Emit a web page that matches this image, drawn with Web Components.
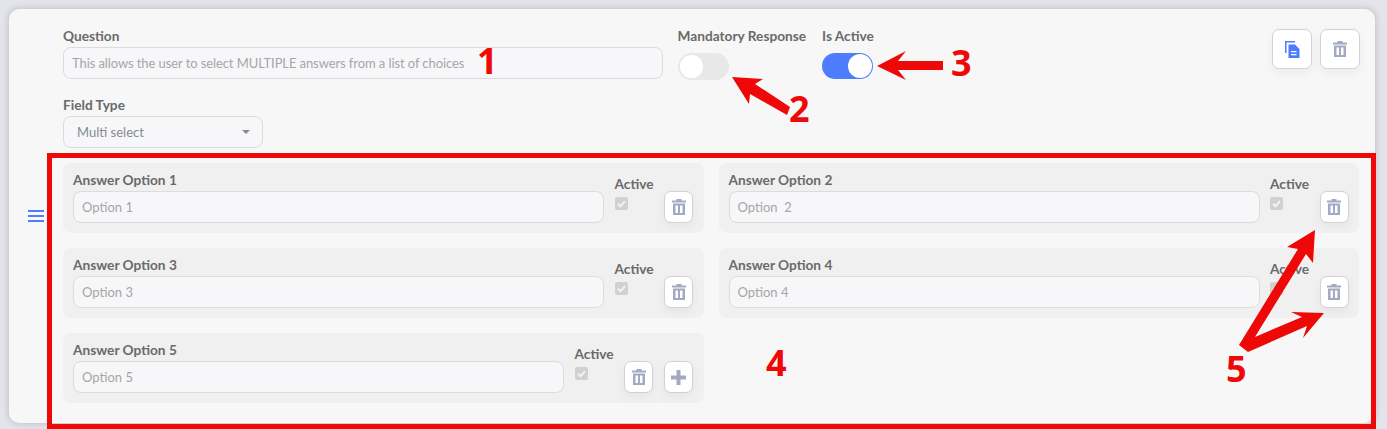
<!DOCTYPE html>
<html>
<head>
<meta charset="utf-8">
<title>Question</title>
<style>
	html, body { margin: 0; height: 429px; overflow: hidden; }
	body { font-family: "Lato", "Liberation Sans", sans-serif; }
</style>
</head>
<body>
<question-page>
	<question-card>
		<top-row slot="top"></top-row>
		<field-type slot="top"></field-type>
		<answer-option label="Answer Option 1" hint="Option 1"></answer-option>
		<answer-option label="Answer Option 2" hint="Option  2"></answer-option>
		<answer-option label="Answer Option 3" hint="Option 3"></answer-option>
		<answer-option label="Answer Option 4" hint="Option 4"></answer-option>
		<answer-option label="Answer Option 5" hint="Option 5" addable></answer-option>
	</question-card>
	<note-layer></note-layer>
</question-page>

<script>
(function() {
	const ICONS = {
		trash: `<svg width="14" height="16" viewBox="0 0 14 16" fill="#a3a9c3"><path d="M4.5 0h5v1.5h-5zM0 1.5h14v2H0z"/><path fill-rule="evenodd" d="M1 4.5h12V16H1zM3.5 6.5V14H6V6.5zM8 6.5V14h2.5V6.5z"/></svg>`,
		copy: `<svg width="15" height="17" viewBox="0 0 15 17" fill="#4d7cfe"><path d="M0 0h10v1.5H1.5V12H0z"/><path fill-rule="evenodd" d="M3.5 3.5H10L14.5 8v9h-11zM6 10v1.2h5.5V10zM6 13v1.2h5.5V13z"/></svg>`,
		plus: `<svg width="15" height="15" viewBox="0 0 15 15" fill="#a3a9c3"><path d="M5.5 0h4v5.5H15v4H9.5V15h-4V9.5H0v-4h5.5z"/></svg>`
	};

	class FieldLabel extends HTMLElement {
		constructor() {
			super();
			this.attachShadow({mode: "open"}).innerHTML = `
				<style>
					:host {
						display: block;
						font: 700 13.7px/16px "Lato", "Liberation Sans", sans-serif;
						color: #6a6a6a;
						white-space: nowrap;
					}
				</style>
				<slot></slot>
			`;
		}
	}
	customElements.define("field-label", FieldLabel);

	class TextBox extends HTMLElement {
		constructor() {
			super();
			this.attachShadow({mode: "open"}).innerHTML = `
				<style>
					:host {
						display: flex;
						align-items: center;
						box-sizing: border-box;
						height: 32px;
						margin-top: 3px;
						padding: 0 8px;
						border: 1px solid #dcdcdf;
						border-radius: 8px;
						background: #f7f7f9;
						font: 400 13px "Lato", "Liberation Sans", sans-serif;
						color: #a6a6a6;
					}
					.text { white-space: pre; }
				</style>
				<span class="text"><slot></slot></span>
				<slot name="end"></slot>
			`;
		}
	}
	customElements.define("text-box", TextBox);

	class ToggleSwitch extends HTMLElement {
		constructor() {
			super();
			this.attachShadow({mode: "open"}).innerHTML = `
				<style>
					:host {
						display: flex;
						box-sizing: border-box;
						width: 51px;
						height: 27px;
						padding: 2px;
						border-radius: 14px;
						background: #e8e8e8;
					}
					:host([on]) {
						justify-content: flex-end;
						height: 26px;
						padding: 1px;
						background: #4d7cfe;
					}
					i {
						display: block;
						width: 23px;
						height: 23px;
						border-radius: 50%;
						background: #fff;
					}
					:host([on]) i { width: 24px; height: 24px; }
				</style>
				<i></i>
			`;
		}
	}
	customElements.define("toggle-switch", ToggleSwitch);

	class IconButton extends HTMLElement {
		constructor() {
			super();
			let size = this.hasAttribute("large") ? "40px" : "29px";
			let height = this.hasAttribute("large") ? "40px" : "32px";
			this.attachShadow({mode: "open"}).innerHTML = `
				<style>
					:host {
						display: flex;
						align-items: center;
						justify-content: center;
						flex: none;
						box-sizing: border-box;
						width: ${size};
						height: ${height};
						border: 1px solid #d2d2d6;
						border-radius: 7px;
						background: #fff;
						box-shadow: 0 4px 8px rgba(60, 60, 80, .06);
					}
				</style>
				${ICONS[this.getAttribute("icon")]}
			`;
		}
	}
	customElements.define("icon-button", IconButton);

	class TopRow extends HTMLElement {
		constructor() {
			super();
			this.attachShadow({mode: "open"}).innerHTML = `
				<style>
					:host {
						display: flex;
						height: 51px;
					}
					.question { width: 600px; margin-right: 14.5px; }
					.question text-box { letter-spacing: -.09px; }
					.mandatory { width: 130px; margin-right: 14.5px; }
					toggle-switch { margin-top: 9px; }
					.actions {
						display: flex;
						gap: 8px;
						margin: 1px -1px 0 auto;
					}
				</style>
				<div class="question">
					<field-label>Question</field-label>
					<text-box>This allows the user to select MULTIPLE answers from a list of choices</text-box>
				</div>
				<div class="mandatory">
					<field-label>Mandatory Response</field-label>
					<toggle-switch></toggle-switch>
				</div>
				<div class="active">
					<field-label>Is Active</field-label>
					<toggle-switch on></toggle-switch>
				</div>
				<div class="actions">
					<icon-button large icon="copy"></icon-button>
					<icon-button large icon="trash"></icon-button>
				</div>
			`;
		}
	}
	customElements.define("top-row", TopRow);

	class FieldType extends HTMLElement {
		constructor() {
			super();
			this.attachShadow({mode: "open"}).innerHTML = `
				<style>
					:host { display: block; margin-top: 18px; }
					text-box {
						width: 200px;
						padding: 0 13px;
						justify-content: space-between;
						color: #858a92;
					}
					i {
						display: block;
						margin-right: -1px;
						border: 4px solid transparent;
						border-top: 4px solid #858a92;
						border-bottom: 0;
					}
				</style>
				<field-label>Field Type</field-label>
				<text-box>Multi select<i slot="end"></i></text-box>
			`;
		}
	}
	customElements.define("field-type", FieldType);

	class AnswerOption extends HTMLElement {
		constructor() {
			super();
			let plus = this.hasAttribute("addable") ? `<icon-button icon="plus"></icon-button>` : "";
			this.attachShadow({mode: "open"}).innerHTML = `
				<style>
					:host {
						display: flex;
						gap: 10.5px;
						box-sizing: border-box;
						height: 70px;
						padding: 9px 10.5px 10px 10px;
						border-radius: 8px;
						background: #f0f0f0;
					}
					.main { flex: 1; min-width: 0; }
					.active { width: 39px; padding-top: 4px; }
					.check {
						display: block;
						margin-top: 5px;
					}
					.buttons {
						display: flex;
						gap: 11px;
						padding-top: 19px;
					}
				</style>
				<div class="main">
					<field-label>${this.getAttribute("label")}</field-label>
					<text-box>${this.getAttribute("hint")}</text-box>
				</div>
				<div class="active">
					<field-label>Active</field-label>
					<svg class="check" width="13" height="13" viewBox="0 0 13 13">
						<rect width="13" height="13" rx="2" fill="#d1d1d1"/>
						<path d="M3 6.8l2.5 2.5L10 4.2" fill="none" stroke="#f4f4f4" stroke-width="2"/>
					</svg>
				</div>
				<div class="buttons">
					<icon-button icon="trash"></icon-button>
					${plus}
				</div>
			`;
		}
	}
	customElements.define("answer-option", AnswerOption);

	class QuestionCard extends HTMLElement {
		constructor() {
			super();
			this.attachShadow({mode: "open"}).innerHTML = `
				<style>
					:host {
						display: grid;
						grid-template-columns: 54px 1fr;
						box-sizing: border-box;
						height: 414px;
						padding: 19px 16px 20px 0;
						border-radius: 10px;
						background: #f7f7f7;
						box-shadow: 0 0 7px rgba(90, 95, 110, .35);
					}
					.handle {
						grid-row: 1 / 3;
						align-self: center;
						justify-self: center;
						display: block;
					}
					.answers {
						display: grid;
						grid-template-columns: 640.5px 1fr;
						gap: 15px;
						margin-top: 15px;
					}
				</style>
				<svg class="handle" width="16" height="12" viewBox="0 0 16 12" fill="#4d7cfe">
					<path d="M0 0h16v2H0zM0 5h16v2H0zM0 10h16v2H0z"/>
				</svg>
				<div><slot name="top"></slot></div>
				<div class="answers"><slot></slot></div>
			`;
		}
	}
	customElements.define("question-card", QuestionCard);

	class NoteLayer extends HTMLElement {
		constructor() {
			super();
			this.attachShadow({mode: "open"}).innerHTML = `
				<style>
					:host {
						position: absolute;
						left: 0;
						top: 0;
						width: 1387px;
						height: 429px;
						font: 700 36px/36px "Open Sans", "Liberation Sans", sans-serif;
						color: #ee0808;
					}
					svg { position: absolute; left: 0; top: 0; }
					b { position: absolute; font-weight: 700; }
				</style>
				<svg width="1387" height="429" fill="#ee0808">
					<path d="M47 153H1376V429H47zM52 158V424H1371V158z" fill-rule="evenodd"/>
					<path d="M732 77L763 79L755 84L790 107L787 115L750 94L749 104z"/>
					<path d="M877 66L906 51L898 61H943V70H898L906 80z"/>
					<path d="M1239 345L1298 249L1287 247L1315 230L1313 263L1306 254L1255 337L1302 317L1291 312L1324 313L1303 338L1307 326L1248 352z"/>
				</svg>
				<b style="left:477px;top:43px">1</b>
				<b style="left:789px;top:91px">2</b>
				<b style="left:951px;top:45px">3</b>
				<b style="left:766px;top:345px">4</b>
				<b style="left:1226px;top:351px">5</b>
			`;
		}
	}
	customElements.define("note-layer", NoteLayer);

	class QuestionPage extends HTMLElement {
		constructor() {
			super();
			this.attachShadow({mode: "open"}).innerHTML = `
				<style>
					:host {
						display: block;
						box-sizing: border-box;
						width: 1387px;
						height: 429px;
						padding: 9px 12px 0 9px;
						background: #e4e5ea;
						overflow: hidden;
					}
				</style>
				<slot></slot>
			`;
		}
	}
	customElements.define("question-page", QuestionPage);
})();
</script>
</body>
</html>
